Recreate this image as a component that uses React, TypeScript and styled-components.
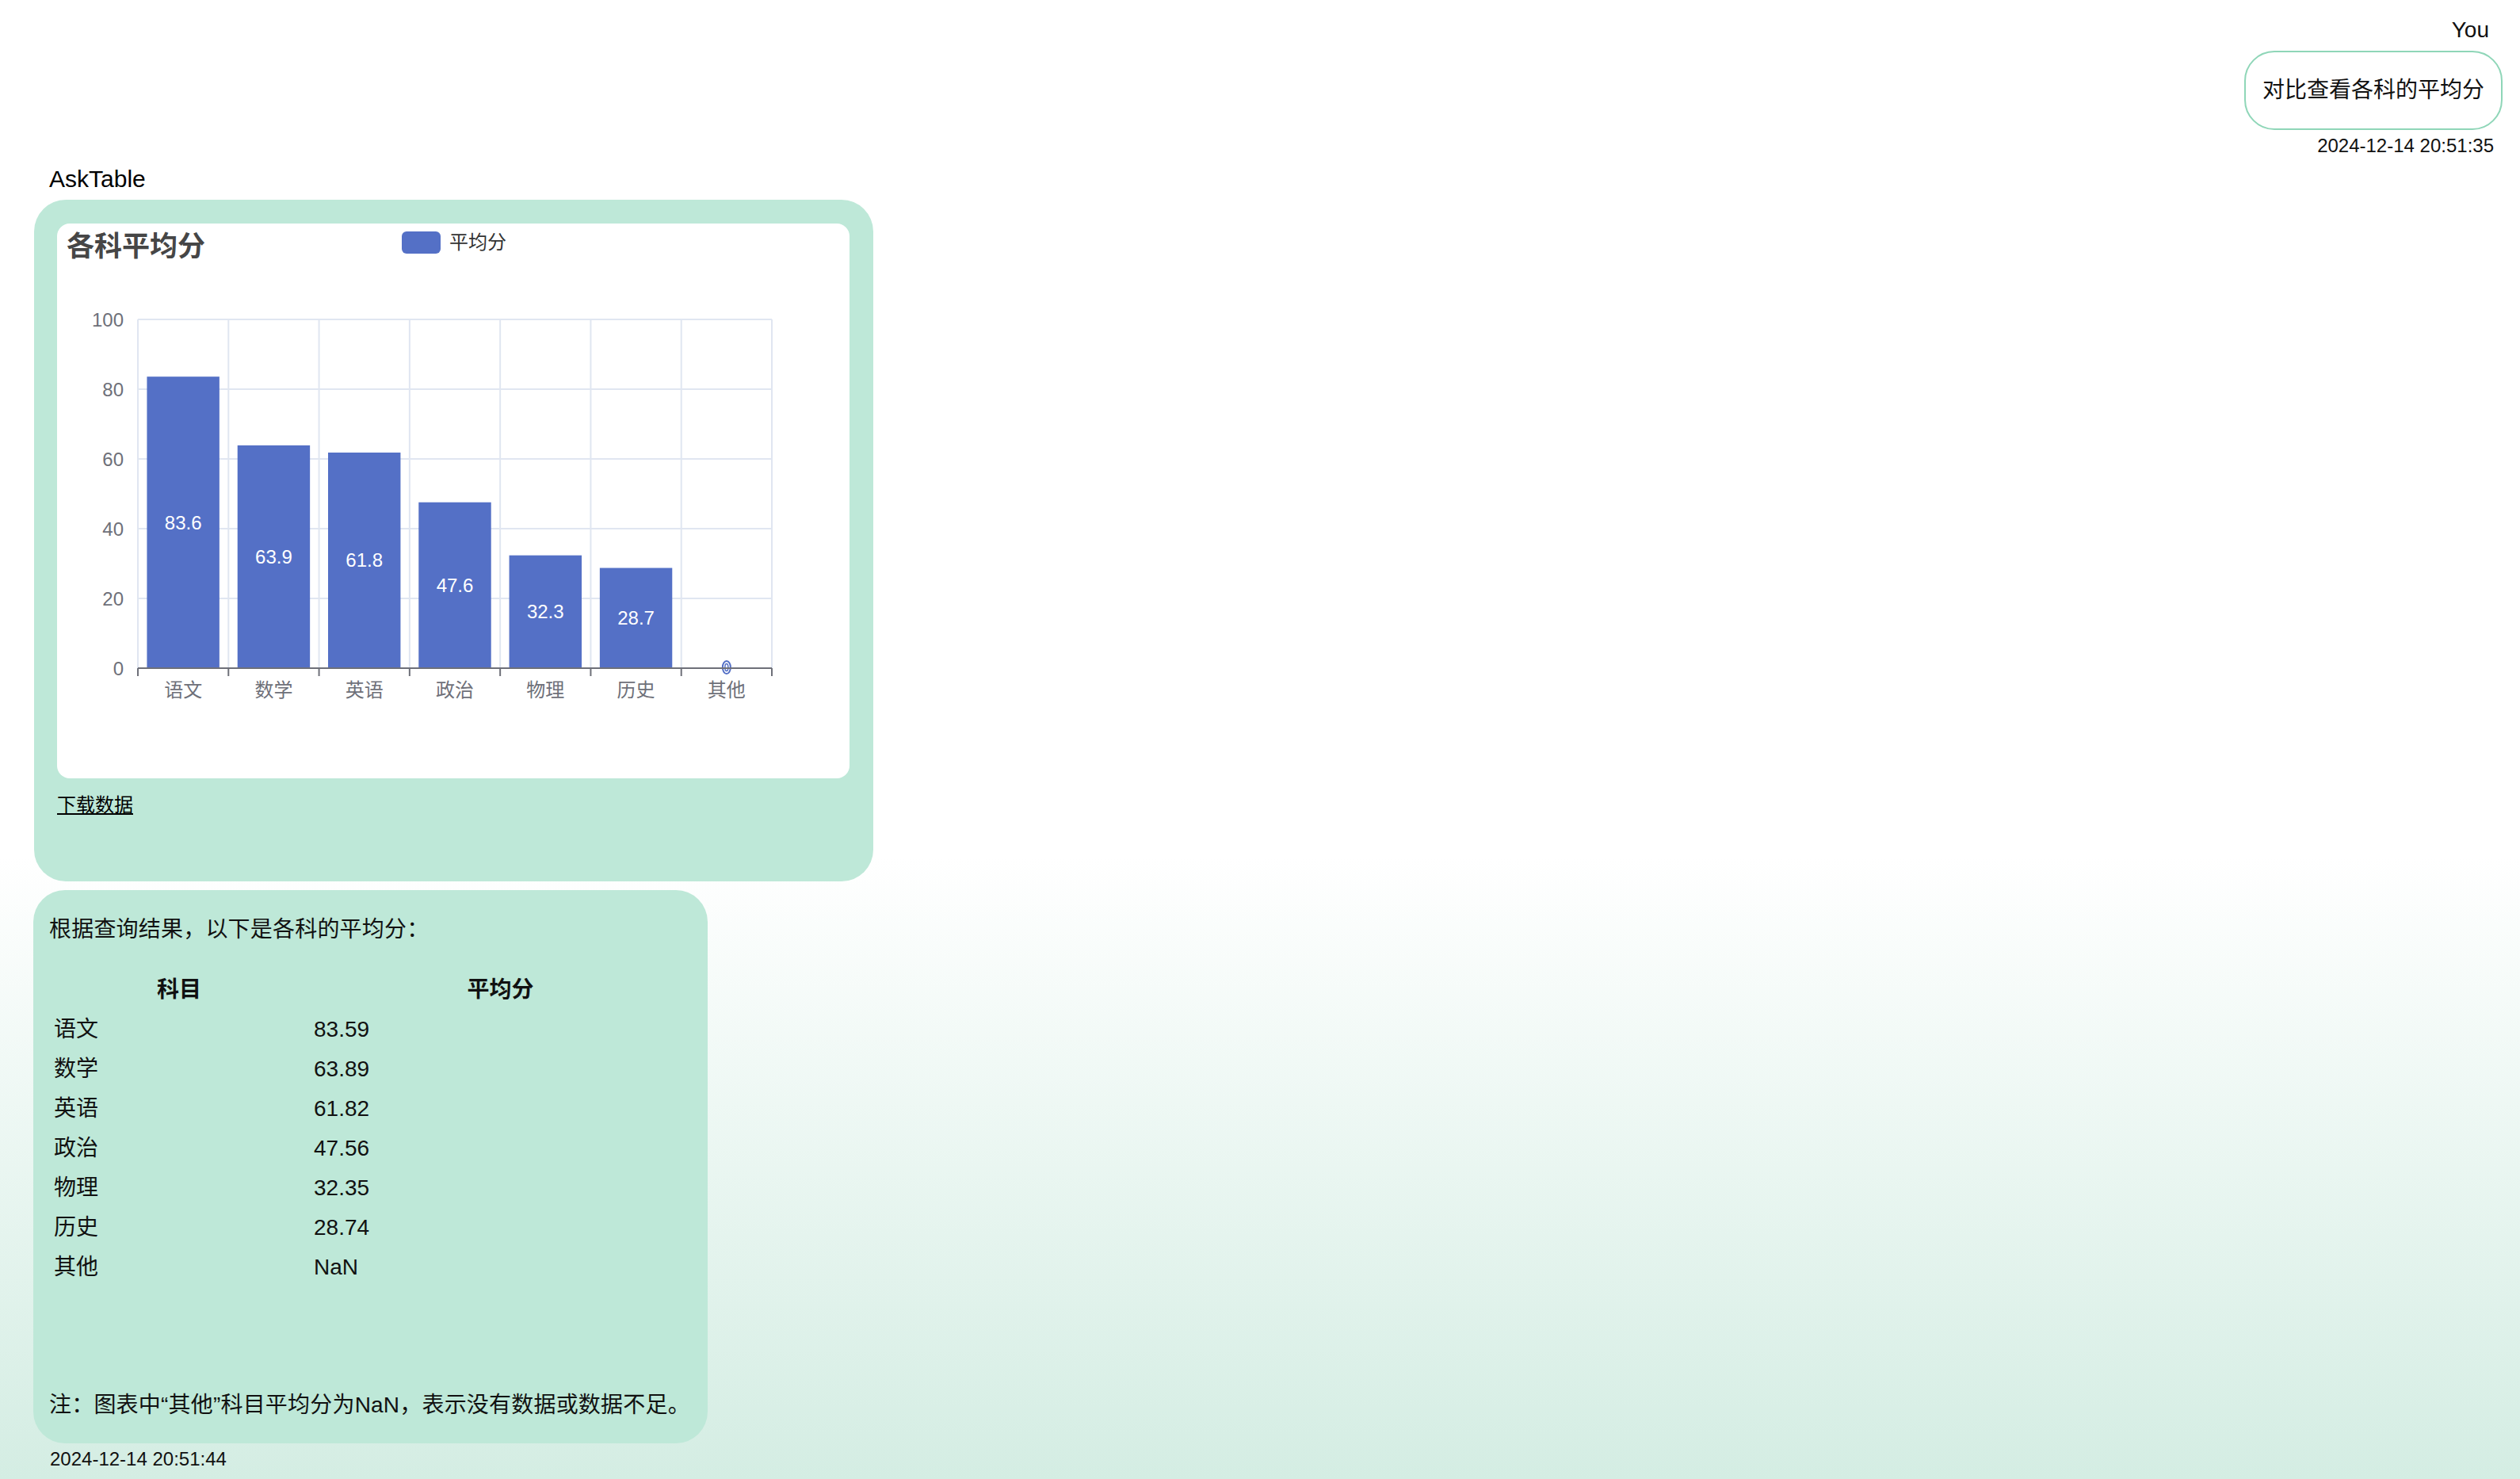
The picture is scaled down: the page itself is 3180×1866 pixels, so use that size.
import React from "react";
import styled, { createGlobalStyle } from "styled-components";

const GlobalStyle = createGlobalStyle`
  html, body {
    margin: 0;
    padding: 0;
    min-height: 100%;
  }
  body {
    min-height: 1866px;
    font-family: "Liberation Sans", "Noto Sans CJK SC", sans-serif;
    color: #111;
    background: linear-gradient(to bottom, #ffffff 0%, #ffffff 58%, #d4ede3 100%);
  }
`;

const Page = styled.div`
  display: flex;
  flex-direction: column;
  padding: 21px 22px 0 42px;
  box-sizing: border-box;
  min-height: 1866px;
`;

const UserBlock = styled.div`
  display: flex;
  flex-direction: column;
  align-items: flex-end;
`;

const Who = styled.div<{ $right?: number }>`
  font-size: 28px;
  line-height: 34px;
  margin-right: ${(p) => p.$right ?? 0}px;
`;

const Bubble = styled.div`
  margin-top: 9px;
  padding: 31px 21px;
  border: 2px solid #8fd6b8;
  border-radius: 38px;
  font-size: 28px;
  line-height: 34px;
  background: #fff;
`;

const Stamp = styled.div<{ $right?: number; $left?: number }>`
  font-size: 24px;
  line-height: 28px;
  margin-top: 6px;
  margin-right: ${(p) => p.$right ?? 0}px;
  margin-left: ${(p) => p.$left ?? 0}px;
`;

const BotLabel = styled.div`
  margin-top: 10px;
  margin-left: 20px;
  font-size: 30px;
  line-height: 36px;
  color: #000;
`;

const Card = styled.div<{ $width: number }>`
  width: ${(p) => p.$width}px;
  box-sizing: border-box;
  background: #bee8d8;
  border-radius: 40px;
`;

const ChartCard = styled(Card)`
  margin-top: 8px;
  margin-left: 1px;
  padding: 30px 30px 80px 29px;
`;

const ChartBox = styled.div`
  width: 1000px;
  height: 700px;
  background: #fff;
  border-radius: 16px;
  overflow: hidden;
`;

const DownloadLink = styled.a`
  display: inline-block;
  margin-top: 18px;
  font-size: 24px;
  line-height: 32px;
  color: #000;
  text-decoration: underline;
  cursor: pointer;
`;

const AnswerCard = styled(Card)`
  margin-top: 11px;
  padding: 31px 20px 29px 20px;
  display: flex;
  flex-direction: column;
`;

const Para = styled.p<{ $gap?: number }>`
  margin: ${(p) => p.$gap ?? 0}px 0 0 0;
  font-size: 28px;
  line-height: 38px;
  letter-spacing: 0.2px;
`;

const ScoreTable = styled.table`
  margin-top: 32px;
  width: 100%;
  border-collapse: collapse;
  font-size: 28px;
  line-height: 38px;

  th {
    font-weight: bold;
    text-align: center;
    padding: 6px;
  }
  td {
    padding: 6px;
    text-align: left;
  }
  th:first-child,
  td:first-child {
    width: 316px;
  }
`;

const data = [
  { name: "语文", avg: 83.59, label: "83.6" },
  { name: "数学", avg: 63.89, label: "63.9" },
  { name: "英语", avg: 61.82, label: "61.8" },
  { name: "政治", avg: 47.56, label: "47.6" },
  { name: "物理", avg: 32.35, label: "32.3" },
  { name: "历史", avg: 28.74, label: "28.7" },
  { name: "其他", avg: NaN, label: "" },
];

const gridL = 102;
const gridR = 902;
const gridT = 121;
const gridB = 561;
const cw = (gridR - gridL) / data.length;
const unit = (gridB - gridT) / 100;
const axisColor = "#6e7079";
const splitColor = "#e0e6f1";
const barColor = "#5470c6";
const chartFont = '"Liberation Sans", "Noto Sans CJK SC", sans-serif';

const BarChart = () => (
  <svg width={1000} height={700} viewBox="0 0 1000 700" fontFamily={chartFont}>
    <text x={12} y={41} fontSize={35} fontWeight="bold" fill="#464646">
      各科平均分
    </text>
    <rect x={435} y={10} width={49} height={28} rx={6} fill={barColor} />
    <text x={495} y={32} fontSize={24} fill="#333">
      平均分
    </text>

    {[0, 20, 40, 60, 80, 100].map((v) => {
      const y = gridB - v * unit;
      return (
        <g key={v}>
          {v > 0 && (
            <line x1={gridL} x2={gridR} y1={y} y2={y} stroke={splitColor} strokeWidth={2} />
          )}
          <text x={84} y={y + 8.5} fontSize={24} fill={axisColor} textAnchor="end">
            {v}
          </text>
        </g>
      );
    })}

    {data.map((_, i) => (
      <line
        key={`v${i}`}
        x1={gridL + i * cw}
        x2={gridL + i * cw}
        y1={gridT}
        y2={gridB}
        stroke={splitColor}
        strokeWidth={2}
      />
    ))}
    <line x1={gridR} x2={gridR} y1={gridT} y2={gridB} stroke={splitColor} strokeWidth={2} />

    {data.map((d, i) => {
      const cx = gridL + i * cw + cw / 2;
      if (isNaN(d.avg)) {
        return (
          <g key={d.name}>
            <ellipse cx={cx} cy={gridB - 1} rx={5} ry={8} fill="#fff" stroke={barColor} strokeWidth={2} />
            <ellipse cx={cx} cy={gridB - 1} rx={2} ry={4.5} fill="none" stroke={barColor} strokeWidth={1.5} />
          </g>
        );
      }
      const h = d.avg * unit;
      const bw = cw * 0.8;
      return (
        <g key={d.name}>
          <rect x={cx - bw / 2} y={gridB - h} width={bw} height={h} fill={barColor} />
          <text x={cx} y={gridB - h / 2 + 8.5} fontSize={24} fill="#fff" textAnchor="middle">
            {d.label}
          </text>
        </g>
      );
    })}

    <line x1={gridL} x2={gridR} y1={gridB} y2={gridB} stroke={axisColor} strokeWidth={2} />
    {[...data, null].map((_, i) => (
      <line
        key={`t${i}`}
        x1={gridL + i * cw}
        x2={gridL + i * cw}
        y1={gridB}
        y2={gridB + 10}
        stroke={axisColor}
        strokeWidth={2}
      />
    ))}
    {data.map((d, i) => (
      <text
        key={`l${d.name}`}
        x={gridL + i * cw + cw / 2}
        y={597}
        fontSize={24}
        fill={axisColor}
        textAnchor="middle"
      >
        {d.name}
      </text>
    ))}
  </svg>
);

const App = () => {
  return (
    <>
      <GlobalStyle />
      <Page>
        <UserBlock>
          <Who $right={17}>You</Who>
          <Bubble>对比查看各科的平均分</Bubble>
          <Stamp $right={11}>2024-12-14 20:51:35</Stamp>
        </UserBlock>

        <BotLabel>AskTable</BotLabel>
        <ChartCard $width={1059}>
          <ChartBox>
            <BarChart />
          </ChartBox>
          <DownloadLink>下载数据</DownloadLink>
        </ChartCard>

        <AnswerCard $width={851}>
          <Para>根据查询结果，以下是各科的平均分：</Para>
          <ScoreTable>
            <thead>
              <tr>
                <th>科目</th>
                <th>平均分</th>
              </tr>
            </thead>
            <tbody>
              {data.map((d) => (
                <tr key={d.name}>
                  <td>{d.name}</td>
                  <td>{isNaN(d.avg) ? "NaN" : d.avg.toFixed(2)}</td>
                </tr>
              ))}
            </tbody>
          </ScoreTable>
          <Para $gap={130}>注：图表中“其他”科目平均分为NaN，表示没有数据或数据不足。</Para>
        </AnswerCard>
        <Stamp $left={21}>2024-12-14 20:51:44</Stamp>
      </Page>
    </>
  );
};

export default App;
